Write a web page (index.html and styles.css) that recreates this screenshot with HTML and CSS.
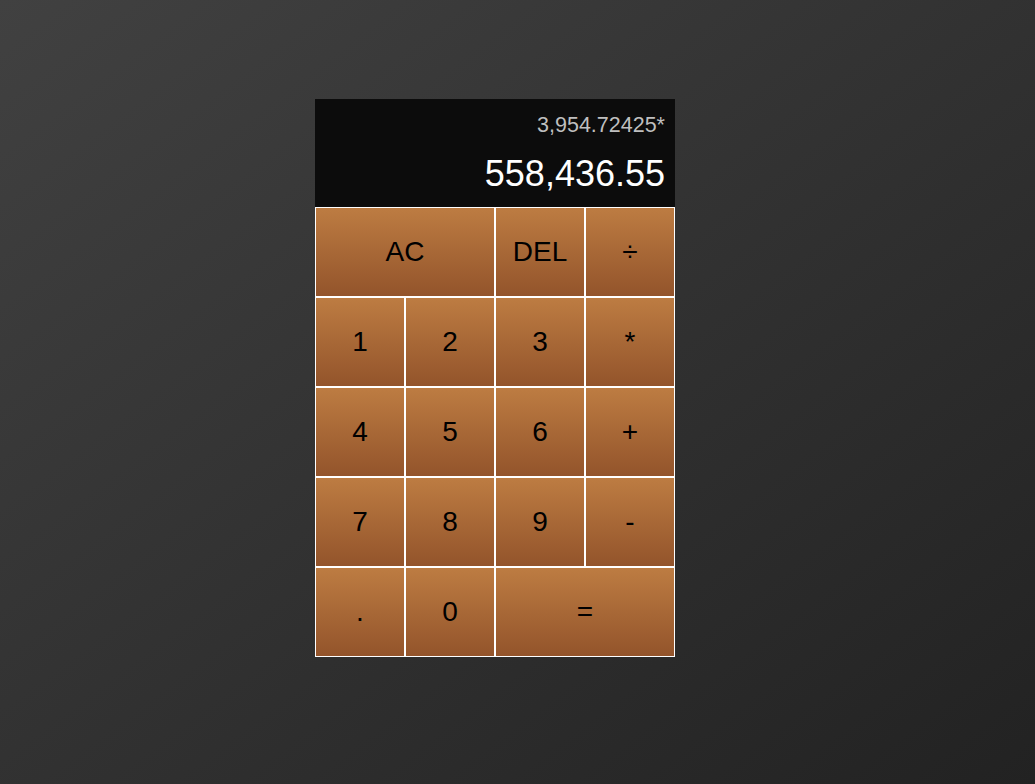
FILE: index.html
```html
<!DOCTYPE html>
<html>
<head>
<meta charset="utf-8">
<title>Calculator</title>
<link rel="stylesheet" href="styles.css">
</head>
<body>
<div class="calculator">
  <div class="output">
    <div class="previous">3,954.72425*</div>
    <div class="current">558,436.55</div>
  </div>
  <button class="key span-two">AC</button>
  <button class="key">DEL</button>
  <button class="key">÷</button>
  <button class="key">1</button>
  <button class="key">2</button>
  <button class="key">3</button>
  <button class="key">*</button>
  <button class="key">4</button>
  <button class="key">5</button>
  <button class="key">6</button>
  <button class="key">+</button>
  <button class="key">7</button>
  <button class="key">8</button>
  <button class="key">9</button>
  <button class="key">-</button>
  <button class="key">.</button>
  <button class="key">0</button>
  <button class="key span-two">=</button>
</div>
</body>
</html>
```

FILE: styles.css
```css
* {
  box-sizing: border-box;
}

html, body {
  margin: 0;
  height: 100%;
}

body {
  background: linear-gradient(to right bottom, #414141, #222222);
  font-family: "Liberation Sans", Arial, sans-serif;
  padding: 99px 0 0 315px;
}

.calculator {
  display: grid;
  grid-template-columns: repeat(4, 90px);
  grid-template-rows: 108px repeat(5, 90px);
  width: 360px;
}

.output {
  grid-column: 1 / -1;
  background: #0c0c0c;
  display: flex;
  flex-direction: column;
  align-items: flex-end;
  padding: 14px 10px 12px;
  gap: 16px;
}

.previous {
  color: #bfbfbf;
  font-size: 21.5px;
  line-height: 24px;
}

.current {
  color: #ffffff;
  font-size: 36px;
  line-height: 41px;
}

.key {
  font-family: "Liberation Sans", Arial, sans-serif;
  font-size: 28px;
  color: #000;
  border: 1px solid #fff;
  background: linear-gradient(#bd7c42, #93542b);
  padding: 0;
  margin: 0;
  outline: none;
  cursor: pointer;
}

.span-two {
  grid-column: span 2;
}
```
